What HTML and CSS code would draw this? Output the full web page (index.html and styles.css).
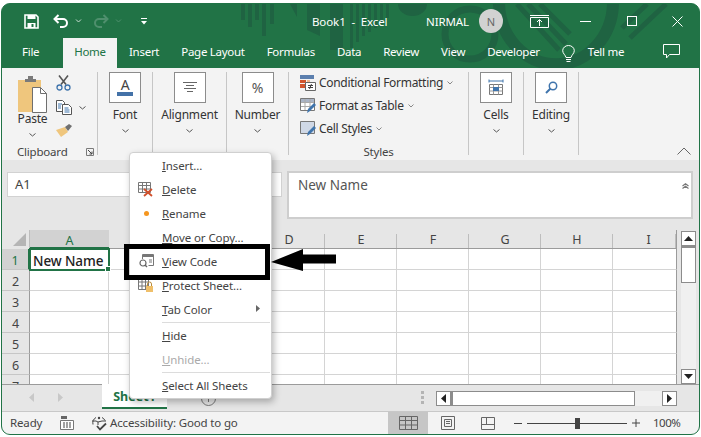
FILE: index.html
```html
<!DOCTYPE html>
<html lang="en">
<head>
<meta charset="utf-8">
<title>Book1 - Excel</title>
<link rel="stylesheet" href="styles.css">
</head>
<body>
<div class="window">
  <svg class="deco" width="697" height="64" viewBox="0 0 697 64">
    <g fill="#1f6342">
      <rect x="239" y="0" width="4" height="16"/><rect x="246" y="0" width="4" height="23"/><rect x="253" y="0" width="4" height="16"/><rect x="260" y="0" width="4" height="32"/><rect x="268" y="0" width="4" height="20"/>
      <path d="M288 0h7v13zM305 0h13v32l-13-6zM328 0h13v46h-13z"/>
      <rect x="348" y="0" width="3" height="44"/><rect x="354" y="0" width="3" height="38"/><rect x="360" y="0" width="3" height="32"/><rect x="366" y="0" width="3" height="28"/><rect x="372" y="0" width="3" height="24"/><rect x="378" y="0" width="3" height="20"/><rect x="384" y="0" width="3" height="14"/>
      <path d="M396 0h29a14.500 12 0 0 1-29 0z"/>
    </g>
    <g fill="none" stroke="#1f6342">
      <circle cx="468" cy="30" r="25" stroke-width="7"/>
      <path d="M497-2a55 60 0 0 0 114 0" stroke-width="12"/>
      <path d="M515 0l42 46M526 0l38 40M538 0l30 30M628 34L664 0M620 24L645 0" stroke-width="5"/>
    </g>
  </svg>

  <header class="titlebar">
    <div class="qat">
      <svg class="i-save" width="15" height="15" viewBox="0 0 15 15"><path d="M1 1h11l2 2v11H1z" fill="none" stroke="#fff" stroke-width="1.600"/><path d="M3.500 1h8v4h-8zM3.500 9h8v5h-8z" fill="#fff"/><rect x="7.500" y="10" width="2" height="3" fill="#217346"/></svg>
      <svg class="i-undo" width="16" height="14" viewBox="0 0 16 14"><path d="M5.500 1L1.500 5l4 4M2 5h8a4 4 0 0 1 0 8H7" fill="none" stroke="#fff" stroke-width="2"/></svg>
      <svg class="i-chev-q" width="7" height="4" viewBox="0 0 7 4"><path d="M1 .5l2.500 2.500L6 .5" fill="none" stroke="#c9dcd1" stroke-width="1"/></svg>
      <svg class="i-redo" width="16" height="14" viewBox="0 0 16 14"><path d="M10.500 1l4 4-4 4M14 5H6a4 4 0 0 0 0 8h3" fill="none" stroke="#4f8f6d" stroke-width="2"/></svg>
      <svg class="i-chev-r" width="7" height="4" viewBox="0 0 7 4"><path d="M1 .5l2.500 2.500L6 .5" fill="none" stroke="#4f8f6d" stroke-width="1"/></svg>
      <svg class="i-qat" width="6" height="7" viewBox="0 0 6 7"><path d="M0 .5h6" stroke="#fff"/><path d="M0 3h6L3 6.500z" fill="#fff"/></svg>
    </div>
    <div class="doc-title">Book1&nbsp; -&nbsp; Excel</div>
    <div class="user">NIRMAL</div>
    <div class="avatar">N</div>
    <div class="winctl">
      <svg class="i-display" width="19" height="13" viewBox="0 0 19 13"><path d="M.5 2.500h18v10H.5z" fill="none" stroke="#fff"/><path d="M0 .5h19" stroke="#fff" stroke-width="1"/><path d="M9.500 11V5M7 7l2.500-2.500L12 7" fill="none" stroke="#fff"/></svg>
      <svg class="i-min" width="11" height="1" viewBox="0 0 11 1"><path d="M0 .5h11" stroke="#fff"/></svg>
      <svg class="i-max" width="10" height="10" viewBox="0 0 10 10"><rect x=".5" y=".5" width="9" height="9" fill="none" stroke="#fff"/></svg>
      <svg class="i-close" width="11" height="11" viewBox="0 0 11 11"><path d="M.5.500l10 10M10.500.500l-10 10" stroke="#fff"/></svg>
    </div>
  </header>

  <nav class="tabs">
    <span class="tab tab-file">File</span>
    <span class="tab tab-active">Home</span>
    <span class="tab">Insert</span>
    <span class="tab">Page Layout</span>
    <span class="tab">Formulas</span>
    <span class="tab">Data</span>
    <span class="tab">Review</span>
    <span class="tab">View</span>
    <span class="tab">Developer</span>
    <svg class="i-bulb" width="13" height="18" viewBox="0 0 13 18"><path d="M4 12.500C3.500 10 .7 8.500.7 5.700a5.800 5.200 0 0 1 11.600 0C12.300 8.500 9.500 10 9 12.500z" fill="none" stroke="#fff"/><path d="M4 14.500h5M4.500 16.500h4" stroke="#fff"/></svg>
    <span class="tab tab-tell">Tell me</span>
    <svg class="i-comment" width="17" height="15" viewBox="0 0 17 15"><path d="M.5.500h16v10H6.500l-3 3.500v-3.500h-3z" fill="none" stroke="#fff"/></svg>
  </nav>

  <section class="ribbon">
    <div class="group group-clip">
      <div class="clip-top">
        <div class="paste">
          <svg width="29" height="38" viewBox="0 0 29 38"><path d="M0 5h23v32H0z" fill="#efc67d"/><path d="M7 4h3V1h5v3h3v3H7z" fill="#7a7a7a"/><path d="M14.500 12.500h8l6 6v19h-14z" fill="#fff" stroke="#6f6f6f"/><path d="M22.500 12.500v6h6" fill="none" stroke="#6f6f6f"/></svg>
          <span class="paste-label">Paste</span>
          <svg class="chev" width="7" height="4" viewBox="0 0 7 4"><path d="M.5.500l3 2.500 3-2.500" fill="none" stroke="#555"/></svg>
        </div>
        <div class="clip-tools">
          <svg width="15" height="16" viewBox="0 0 15 16"><path d="M3 .5l7 9M12 .5l-7 9" stroke="#555" stroke-width="1.600"/><circle cx="3.500" cy="12.500" r="2.500" fill="none" stroke="#3f74ac" stroke-width="1.300"/><circle cx="11.500" cy="12.500" r="2.500" fill="none" stroke="#3f74ac" stroke-width="1.300"/></svg>
          <div class="copy-row">
            <svg width="16" height="15" viewBox="0 0 16 15"><path d="M.5.500h6l2 2v9h-8z" fill="#fff" stroke="#555"/><path d="M6.500 4.500h6l3 3v7h-9z" fill="#fff" stroke="#555"/><path d="M2 4h4M2 6h3M2 8h3M8.500 8h4M8.500 10h5M8.500 12h5" stroke="#3f74ac"/></svg>
            <svg class="chev" width="7" height="4" viewBox="0 0 7 4"><path d="M.5.500l3 2.500 3-2.500" fill="none" stroke="#555"/></svg>
          </div>
          <svg width="17" height="15" viewBox="0 0 17 15"><path d="M0 7l5 7 7-5-3-5z" fill="#efc67d"/><path d="M9 4l4-3 3 2-4 5z" fill="#6f6f6f"/></svg>
        </div>
      </div>
      <div class="group-label clip-label">Clipboard
        <svg class="launcher" width="8" height="8" viewBox="0 0 8 8"><path d="M.5 7.500v-7h7v7z" fill="none" stroke="#7a7a7a"/><path d="M2 2l4 4M6 3.500V6H3.500" fill="none" stroke="#444"/></svg>
      </div>
    </div>

    <div class="group group-big g-font">
      <div class="bigbox"><svg width="16" height="19" viewBox="0 0 16 19"><text x="8" y="12" text-anchor="middle" class="a-glyph">A</text><rect y="14" width="16" height="4" fill="#4472a8"/></svg></div>
      <span class="big-label">Font</span>
      <svg class="chev" width="7" height="4" viewBox="0 0 7 4"><path d="M.5.500l3 2.500 3-2.500" fill="none" stroke="#555"/></svg>
    </div>
    <div class="group group-big g-align">
      <div class="bigbox"><svg width="14" height="11" viewBox="0 0 14 11"><path d="M0 .5h14M3 3.500h8M1 6.500h12M4 9.500h6" stroke="#666"/></svg></div>
      <span class="big-label">Alignment</span>
      <svg class="chev" width="7" height="4" viewBox="0 0 7 4"><path d="M.5.500l3 2.500 3-2.500" fill="none" stroke="#555"/></svg>
    </div>
    <div class="group group-big g-number">
      <div class="bigbox pct">%</div>
      <span class="big-label">Number</span>
      <svg class="chev" width="7" height="4" viewBox="0 0 7 4"><path d="M.5.500l3 2.500 3-2.500" fill="none" stroke="#555"/></svg>
    </div>

    <div class="group g-styles">
      <div class="style-row">
        <svg width="16" height="16" viewBox="0 0 16 16"><path d="M0 0h14v4H0z" fill="#5b7fae"/><path d="M0 5h6v3H0z" fill="#d2562f"/><path d="M0 9h6v4H0z" fill="#d2562f"/><path d="M7 5h3v3H7z" fill="#f1b98f"/><path d="M5.500 7.500h10v8h-10z" fill="#fff" stroke="#666"/><path d="M8 10.500h5M8 12.500h5M11.500 9l-2 5" stroke="#444" fill="none"/></svg>
        <span>Conditional Formatting</span>
        <svg class="chev-s" width="6" height="4" viewBox="0 0 6 4"><path d="M.5.500l2.500 2.500 2.500-2.500" fill="none" stroke="#888"/></svg>
      </div>
      <div class="style-row">
        <svg width="16" height="16" viewBox="0 0 16 16"><path d="M.5.500h14v12H.500z" fill="#fff" stroke="#777"/><path d="M1 1h13v3H1z" fill="#a9b4c6"/><path d="M5 1v11M10 1v11M1 4.500h13M1 8.500h13" stroke="#aaa"/><path d="M7 15l1-4 6-6 2 2-6 6z" fill="#3f74ac"/></svg>
        <span>Format as Table</span>
        <svg class="chev-s" width="6" height="4" viewBox="0 0 6 4"><path d="M.5.500l2.500 2.500 2.500-2.500" fill="none" stroke="#888"/></svg>
      </div>
      <div class="style-row">
        <svg width="16" height="16" viewBox="0 0 16 16"><path d="M.5.500h14v12H.500z" fill="#cfd8e6" stroke="#777"/><path d="M7 15l1-4 6-6 2 2-6 6z" fill="#3f74ac"/></svg>
        <span>Cell Styles</span>
        <svg class="chev-s" width="6" height="4" viewBox="0 0 6 4"><path d="M.5.500l2.500 2.500 2.500-2.500" fill="none" stroke="#888"/></svg>
      </div>
      <div class="group-label styles-label">Styles</div>
    </div>

    <div class="group group-big g-cells">
      <div class="bigbox"><svg width="16" height="17" viewBox="0 0 16 17"><path d="M1 .5v3M15 .5v3M1 2h14" stroke="#3f74ac"/><path d="M1.500 5.500h13v10h-13z" fill="#fff" stroke="#777"/><path d="M5.500 5.500v10M10.500 5.500v10M1.500 8.500h13M1.500 12h13" stroke="#999"/><rect x="5" y="8" width="6" height="4" fill="#3f74ac"/></svg></div>
      <span class="big-label">Cells</span>
      <svg class="chev" width="7" height="4" viewBox="0 0 7 4"><path d="M.5.500l3 2.500 3-2.500" fill="none" stroke="#555"/></svg>
    </div>
    <div class="group group-big g-edit">
      <div class="bigbox"><svg width="13" height="13" viewBox="0 0 13 13"><circle cx="8" cy="5" r="3.700" fill="none" stroke="#3f74ac" stroke-width="1.500"/><path d="M5.500 7.500L1 12" stroke="#3f74ac" stroke-width="2"/></svg></div>
      <span class="big-label">Editing</span>
      <svg class="chev" width="7" height="4" viewBox="0 0 7 4"><path d="M.5.500l3 2.500 3-2.500" fill="none" stroke="#555"/></svg>
    </div>
    <div class="ribbon-rest">
      <svg width="14" height="8" viewBox="0 0 14 8"><path d="M.5 7.500L7 1l6.500 6.500" fill="none" stroke="#666"/></svg>
    </div>
  </section>

  <section class="formula">
    <div class="namebox">A1</div>
    <div class="fxbox">
      <span>New Name</span>
      <svg width="7" height="6" viewBox="0 0 7 6"><path d="M.5 3L3.500.8 6.500 3M.5 5.500L3.500 3.300l3 2.200" fill="none" stroke="#777" stroke-width="1.200"/></svg>
    </div>
  </section>

  <section class="sheet">
    <div class="grid">
      <div class="corner"><svg width="13" height="13" viewBox="0 0 13 13"><path d="M13 0v13H0z" fill="#b5b5b5"/></svg></div>
      <div class="ch ch-sel">A</div><div class="ch">B</div><div class="ch">C</div><div class="ch">D</div><div class="ch">E</div><div class="ch">F</div><div class="ch">G</div><div class="ch">H</div><div class="ch ch-i">I</div>

      <div class="rh rh-sel">1</div><div class="c c-sel">New Name<i class="handle"></i></div><div class="c"></div><div class="c"></div><div class="c"></div><div class="c"></div><div class="c"></div><div class="c"></div><div class="c"></div><div class="c"></div>
      <div class="rh">2</div><div class="c"></div><div class="c"></div><div class="c"></div><div class="c"></div><div class="c"></div><div class="c"></div><div class="c"></div><div class="c"></div><div class="c"></div>
      <div class="rh">3</div><div class="c"></div><div class="c"></div><div class="c"></div><div class="c"></div><div class="c"></div><div class="c"></div><div class="c"></div><div class="c"></div><div class="c"></div>
      <div class="rh">4</div><div class="c"></div><div class="c"></div><div class="c"></div><div class="c"></div><div class="c"></div><div class="c"></div><div class="c"></div><div class="c"></div><div class="c"></div>
      <div class="rh">5</div><div class="c"></div><div class="c"></div><div class="c"></div><div class="c"></div><div class="c"></div><div class="c"></div><div class="c"></div><div class="c"></div><div class="c"></div>
      <div class="rh">6</div><div class="c"></div><div class="c"></div><div class="c"></div><div class="c"></div><div class="c"></div><div class="c"></div><div class="c"></div><div class="c"></div><div class="c"></div>
      <div class="rh">7</div><div class="c"></div><div class="c"></div><div class="c"></div><div class="c"></div><div class="c"></div><div class="c"></div><div class="c"></div><div class="c"></div><div class="c"></div>
    </div>
    <div class="vscroll">
      <div class="sb-btn"><svg width="9" height="5" viewBox="0 0 9 5"><path d="M4.500 0L9 5H0z" fill="#222"/></svg></div>
      <div class="v-thumb"></div>
      <div class="v-track"></div>
      <div class="sb-btn"><svg width="9" height="5" viewBox="0 0 9 5"><path d="M4.500 5L9 0H0z" fill="#222"/></svg></div>
    </div>
  </section>

  <section class="sheetbar">
    <div class="sheetnav">
      <svg width="5" height="9" viewBox="0 0 5 9"><path d="M5 0v9L0 4.500z" fill="#c8c8c8"/></svg>
      <svg width="5" height="9" viewBox="0 0 5 9"><path d="M0 0v9l5-4.500z" fill="#c8c8c8"/></svg>
    </div>
    <div class="sheet-tab">Sheet1</div>
    <svg class="addsheet" width="15" height="15" viewBox="0 0 15 15"><circle cx="7.500" cy="7.500" r="7" fill="none" stroke="#777"/><path d="M7.500 4v7M4 7.500h7" stroke="#777"/></svg>
    <div class="dots"><i></i><i></i><i></i></div>
    <div class="hscroll">
      <div class="sb-btn"><svg width="5" height="9" viewBox="0 0 5 9"><path d="M5 0v9L0 4.500z" fill="#222"/></svg></div>
      <div class="h-thumb"></div>
      <div class="h-track"></div>
      <div class="sb-btn"><svg width="5" height="9" viewBox="0 0 5 9"><path d="M0 0v9l5-4.500z" fill="#222"/></svg></div>
    </div>
  </section>

  <footer class="status">
    <span class="ready">Ready</span>
    <svg class="i-macro" width="14" height="14" viewBox="0 0 14 14"><path d="M1 0h6v3H1z" fill="#666"/><path d="M.5 4.500h13v9H.5z" fill="#fff" stroke="#777"/><path d="M3 7h2M6 7h2M9 7h2M3 9h2M6 9h2M9 9h2M3 11h2M6 11h2M9 11h2" stroke="#444"/></svg>
    <svg class="i-access" width="17" height="15" viewBox="0 0 17 15"><circle cx="8" cy="2" r="1.200" fill="#444"/><path d="M5 1.500a6.500 6.500 0 0 0-3 7M11 1.500a6.500 6.500 0 0 1 3 3M1 5h4l2 1 4-1h4M7 6v3" fill="none" stroke="#444"/><path d="M6 10l3 3.500 6-6" fill="none" stroke="#444" stroke-width="1.800"/></svg>
    <span class="access">Accessibility: Good to go</span>
    <div class="viewbtn viewbtn-on"><svg width="19" height="14" viewBox="0 0 19 14"><path d="M.5.500h18v13H.500zM6.500.500v13M12.500.500v13M.5 4.500h18M.5 9h18" fill="none" stroke="#666"/></svg></div>
    <svg class="i-pagelayout" width="14" height="14" viewBox="0 0 14 14"><path d="M.5.500h13v13H.500z" fill="none" stroke="#666"/><path d="M3.500 3.500h7v7h-7zM5 5.500h4M5 7.500h4" fill="none" stroke="#666"/></svg>
    <svg class="i-break" width="14" height="13" viewBox="0 0 14 13"><path d="M.5.500h13v12H.500zM.5 7.500h13M5.500.500v7" fill="none" stroke="#666"/></svg>
    <span class="zoom-minus"></span>
    <div class="slider"><i></i></div>
    <svg class="i-plus" width="8" height="8" viewBox="0 0 8 8"><path d="M0 4h8M4 0v8" stroke="#444"/></svg>
    <span class="zoom-val">100%</span>
  </footer>

  <div class="menu">
    <div class="mi"><span class="mi-ico"></span><span><u>I</u>nsert...</span></div>
    <div class="mi"><span class="mi-ico"><svg width="16" height="15" viewBox="0 0 16 15"><path d="M.5.500h12v10H.500zM4.500.500v10M8.500.500v10M.5 3.500h12M.5 7h12" fill="none" stroke="#777"/><path d="M6 7l8 7M14 7l-8 7" stroke="#d2502c" stroke-width="1.800"/></svg></span><span><u>D</u>elete</span></div>
    <div class="mi"><span class="mi-ico"><i class="dot"></i></span><span><u>R</u>ename</span></div>
    <div class="mi"><span class="mi-ico"></span><span><u>M</u>ove or Copy...</span></div>
    <div class="mi"><span class="mi-ico"><svg width="15" height="14" viewBox="0 0 15 14"><path d="M3.500 5V.5h11v11h-5" fill="none" stroke="#777"/><path d="M4 1h10v2H4z" fill="#777"/><path d="M10 6h3M10 8h3" stroke="#777"/><circle cx="4" cy="9" r="3" fill="none" stroke="#666" stroke-width="1.200"/><path d="M6 11l2 2" stroke="#666" stroke-width="1.500"/></svg></span><span><u>V</u>iew Code</span></div>
    <div class="mi"><span class="mi-ico"><svg width="16" height="15" viewBox="0 0 16 15"><path d="M.5.500h10v11H.500zM4 .5v11M7.500.500v11M.5 4h10M.5 8h10" fill="none" stroke="#777"/><rect x="8" y="8" width="7" height="6" fill="#efbf6a"/><path d="M9.500 8V6a2 2 0 0 1 4 0v2" fill="none" stroke="#b98b3a"/></svg></span><span><u>P</u>rotect Sheet...</span></div>
    <div class="mi"><span class="mi-ico"></span><span><u>T</u>ab Color</span><svg class="mi-arrow" width="4" height="7" viewBox="0 0 4 7"><path d="M0 0l4 3.500L0 7z" fill="#666"/></svg></div>
    <div class="msep"></div>
    <div class="mi"><span class="mi-ico"></span><span><u>H</u>ide</span></div>
    <div class="mi mi-off"><span class="mi-ico"></span><span><u>U</u>nhide...</span></div>
    <div class="msep"></div>
    <div class="mi"><span class="mi-ico"></span><span><u>S</u>elect All Sheets</span></div>
  </div>

  <div class="callout"></div>
  <svg class="arrow" width="66" height="22" viewBox="0 0 66 22"><path d="M0 13L32 0v5.500h33v9H32V22z" fill="#000"/></svg>
</div>
</body>
</html>
```

FILE: styles.css
```css
* { box-sizing: border-box; }
html, body { margin: 0; padding: 0; background: #fff; }
body { font-family: "Noto Sans", "Open Sans", sans-serif; font-size: 12px; color: #444; overflow: hidden; }
svg { display: block; flex: none; }

.window {
  position: relative; width: 699px; height: 432px; margin: 3px 0 0 1px;
  border: 1px solid #217346; border-radius: 9px; background: #217346;
  overflow: hidden; display: flex; flex-direction: column;
}
.deco { position: absolute; left: 0; top: 0; }

.titlebar { position: relative; height: 34px; flex: none; display: flex; align-items: center; color: #fff; font-size: 11.500px; letter-spacing: -.1px; }
.qat { display: flex; align-items: center; width: 240px; padding-left: 22px; }
.i-undo { margin-left: 14px; }
.i-chev-q { margin-left: 6px; }
.i-redo { margin-left: 11px; }
.i-chev-r { margin-left: 6px; }
.i-qat { margin-left: 19px; }
.doc-title { margin-left: 70px; width: 114px; white-space: nowrap; }
.user { width: 53px; }
.avatar { width: 24px; height: 24px; border-radius: 50%; background: #d2d2d2; color: #666; display: flex; align-items: center; justify-content: center; font-size: 11px; }
.winctl { display: flex; align-items: center; margin-left: 27px; }
.i-min { margin-left: 31px; }
.i-max { margin-left: 36px; }
.i-close { margin-left: 35px; }

.tabs { position: relative; height: 30px; flex: none; display: flex; align-items: center; color: #fff; font-size: 11.500px; letter-spacing: -.28px; padding-left: 9px; }
.tab { height: 30px; line-height: 28px; padding: 0 11px; white-space: nowrap; }
.tab-file { width: 40px; margin-right: 12px; }
.tab-active { background: #f3f3f3; color: #217346; padding: 0 10px; width: 54px; margin-right: 1px; text-align: center; }
.i-bulb { margin-left: 11px; margin-top: 1px; }
.tab-tell { margin-left: 2px; }
.i-comment { margin-left: 28px; margin-top: -3px; }

.ribbon { position: relative; height: 92px; flex: none; background: #f3f3f3; display: flex; padding-top: 4px; letter-spacing: -.2px; }
.group { height: 83px; border-right: 1px solid #c6c6c6; flex: none; display: flex; flex-direction: column; }
.group-clip { width: 96px; }
.clip-top { display: flex; flex: none; padding: 3px 0 0 16px; height: 70px; }
.paste { width: 29px; display: flex; flex-direction: column; align-items: center; }
.paste-label { font-size: 12px; line-height: 16px; margin-top: -2px; color: #333; }
.paste .chev { margin-top: 6px; }
.clip-tools { margin-left: 9px; display: flex; flex-direction: column; gap: 8px; }
.copy-row { display: flex; align-items: center; gap: 7px; margin-top: 1px; }
.group-label { font-size: 11.500px; color: #444; line-height: 14px; flex: none; }
.clip-label { display: flex; align-items: center; padding-left: 15px; margin-top: 3px; white-space: nowrap; }
.launcher { margin-left: 18px; }

.group-big { align-items: center; }
.g-font { width: 55px; }
.g-align { width: 74px; }
.g-number { width: 62px; }
.g-cells { width: 55px; }
.g-edit { width: 55px; }
.bigbox { width: 32px; height: 31px; background: #fff; border: 1px solid #8c8c8c; display: flex; align-items: center; justify-content: center; flex: none; }
.a-glyph { font-size: 14px; font-family: "Noto Sans", sans-serif; fill: #444; }
.pct { font-size: 14px; color: #555; }
.big-label { margin-top: 4px; line-height: 16px; color: #333; white-space: nowrap; font-size: 12px; }
.group-big .chev { margin-top: 6px; }

.g-styles { width: 180px; padding: 0 0 0 11px; position: relative; }
.style-row { height: 23px; flex: none; margin-top: 0; display: flex; align-items: center; color: #333; white-space: nowrap; letter-spacing: -.3px; }
.style-row:first-child { margin-top: -1px; }
.style-row span { margin-left: 3px; padding-bottom: 1px; }
.chev-s { margin-left: 4px; }
.styles-label { margin-top: 5px; padding-right: 11px; text-align: center; }
.ribbon-rest { flex: 1; display: flex; justify-content: flex-end; align-items: flex-end; padding: 0 8px 5px 0; }

.formula { height: 70px; flex: none; background: #e6e6e6; display: flex; align-items: flex-start; padding: 11px 5px 0; position: relative; }
.namebox { width: 275px; height: 25px; margin-top: 1px; background: #fff; border: 1px solid #d2d2d2; padding-left: 7px; line-height: 23px; font-size: 13px; color: #444; }
.fxbox { margin-left: 5px; width: 406px; height: 48px; background: #fff; border: 2px solid #cecece; padding: 3px 2px 0 9px; display: flex; justify-content: space-between; line-height: 18px; font-size: 13.500px; color: #555; }
.fxbox svg { margin-top: 7px; }

.sheet { height: 154px; flex: none; display: flex; background: #e6e6e6; position: relative; }
.grid { display: grid; grid-template-columns: 28px 79px repeat(7, 72px) 64px; grid-template-rows: 19px repeat(7, 21px); width: 675px; height: 154px; overflow: hidden; }
.corner { border-right: 1px solid #bdbdbd; display: flex; justify-content: flex-end; align-items: flex-end; padding: 0 3px 3px 0; }
.ch { display: flex; align-items: center; justify-content: center; font-size: 12.500px; color: #444; padding-top: 1px; background: linear-gradient(#bdbdbd, #bdbdbd) right bottom / 1px 14px no-repeat; border-bottom: 1px solid #9b9b9b; }
.ch-sel { background: #d2d2d2; color: #217346; border-bottom: 2px solid #217346; padding-top: 3px; }
.ch-i { border-right: 1px solid #9b9b9b; padding-left: 8px; }
.rh { background: #e6e6e6; border-right: 1px solid #9b9b9b; border-bottom: 1px solid #c6c6c6; display: flex; align-items: center; justify-content: center; font-size: 12.500px; color: #444; padding-top: 3px; }
.rh-sel { background: #d2d2d2; color: #217346; border-right: 2px solid #217346; }
.c { background: #fff; border-right: 1px solid #d4d4d4; border-bottom: 1px solid #d4d4d4; }
.c:nth-child(10n+10) { border-right: 1px solid #9b9b9b; }
.c-sel { position: relative; border: 2px solid #217346; margin: -1px; padding-left: 2px; padding-top: 2px; line-height: 19px; font-size: 13.500px; font-weight: 500; letter-spacing: -.1px; color: #222; white-space: nowrap; z-index: 1; background: #fff; }
.handle { position: absolute; right: -3px; bottom: -3px; width: 6px; height: 6px; background: #217346; border: 1px solid #fff; }

.vscroll { width: 22px; padding: 1px 3px 0 4px; display: flex; flex-direction: column; }
.sb-btn { flex: none; width: 15px; height: 15px; background: #fff; border: 1px solid #8c8c8c; display: flex; align-items: center; justify-content: center; }
.v-thumb { flex: none; height: 37px; background: #fff; border: 1px solid #8c8c8c; border-top-width: 2px; }
.v-track { flex: 1; background: #f0f0f0; }

.sheetbar { position: relative; height: 28px; flex: none; background: #e6e6e6; border-top: 1px solid #9b9b9b; border-bottom: 1px solid #c8c8c8; display: flex; }
.sheetnav { width: 100px; display: flex; align-items: center; gap: 24px; padding: 0 0 2px 27px; }
.sheet-tab { width: 65px; height: 25px; margin-top: -1px; background: #fff; border-bottom: 2px solid #217346; color: #217346; font-weight: 700; text-align: center; line-height: 26px; font-size: 12.500px; }
.addsheet { margin: 6px 0 0 34px; }
.dots { margin: 6px 0 0 205px; width: 3px; display: flex; flex-direction: column; gap: 2px; }
.dots i { display: block; width: 3px; height: 3px; background: #b4b4b4; }
.hscroll { margin: 6px 0 0 12px; width: 241px; height: 15px; display: flex; }
.h-thumb { width: 184px; background: #fff; border: 1px solid #8c8c8c; border-left-width: 2px; }
.h-track { flex: 1; background: #f0f0f0; }

.status { height: 22px; flex: none; background: #f3f3f3; display: flex; align-items: center; position: relative; font-size: 11.500px; letter-spacing: -.15px; color: #444; }
.ready { margin-left: 8px; width: 50px; padding-bottom: 2px; }
.i-access { margin-left: 17px; }
.access { margin-left: 2px; width: 278px; white-space: nowrap; padding-bottom: 2px; }
.viewbtn { width: 40px; height: 22px; display: flex; align-items: center; justify-content: center; flex: none; }
.viewbtn-on { background: #c6c6c6; }
.i-pagelayout { margin-left: 13px; }
.i-break { margin-left: 26px; }
.zoom-minus { width: 8px; height: 1px; background: #444; margin-left: 19px; }
.slider { position: relative; width: 100px; height: 1px; background: #444; margin-left: 5px; }
.slider i { position: absolute; left: 48px; top: -5px; width: 5px; height: 11px; background: #444; }
.i-plus { margin-left: 5px; }
.zoom-val { margin-left: 13px; padding-bottom: 2px; letter-spacing: -.5px; }

.menu { position: absolute; left: 127px; top: 148px; width: 143px; height: 247px; background: #fff; border: 1px solid #d0d0d0; border-radius: 4px; box-shadow: 2px 3px 7px rgba(0,0,0,.28); z-index: 3; font-size: 11.500px; letter-spacing: -.1px; color: #444; }
.mi { position: relative; height: 24px; display: flex; align-items: center; white-space: nowrap; }
.mi-off { color: #aaa; }
.mi-ico { width: 32px; flex: none; display: flex; justify-content: center; }
.dot { display: block; width: 5px; height: 5px; border-radius: 50%; background: #f5961f; }
.mi-arrow { position: absolute; right: 11px; top: 8px; }
.msep { height: 2px; margin-left: 32px; margin-right: 1px; border-bottom: 1px solid #dcdcdc; }

.callout { position: absolute; left: 122px; top: 240px; width: 146px; height: 36px; border: 5px solid #000; z-index: 4; }
.arrow { position: absolute; left: 269px; top: 245px; z-index: 4; }
```
